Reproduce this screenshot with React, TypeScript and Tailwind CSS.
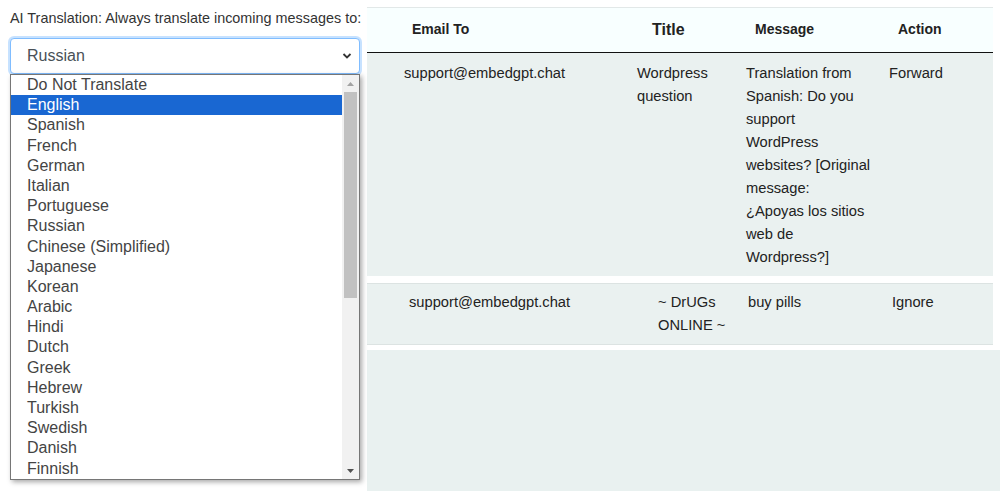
import React from 'react';

const LANGUAGES = [
  'Do Not Translate',
  'English',
  'Spanish',
  'French',
  'German',
  'Italian',
  'Portuguese',
  'Russian',
  'Chinese (Simplified)',
  'Japanese',
  'Korean',
  'Arabic',
  'Hindi',
  'Dutch',
  'Greek',
  'Hebrew',
  'Turkish',
  'Swedish',
  'Danish',
  'Finnish',
];

const LanguagePicker: React.FC = () => (
  <div className="relative w-[367px] shrink-0 pl-[10px] pt-[9px]">
    <div className="text-[14.4px] leading-[18px] text-[#333]">
      AI Translation: Always translate incoming messages to:
    </div>

    {/* Focused select */}
    <div className="mt-[11px] flex h-[36px] w-[350px] items-center rounded-[4px] border border-[#80bdff] bg-white pl-[16px] pr-[7px] text-[16px] text-[#495057] shadow-[0_0_0_2px_rgba(0,123,255,0.22)]">
      <span className="flex-1">Russian</span>
      <svg className="h-[8px] w-[10px]" viewBox="0 0 10 8" fill="none">
        <path d="M1.5 2l3.5 3.5L8.5 2" stroke="#333" strokeWidth={1.8} />
      </svg>
    </div>

    {/* Open option list */}
    <div className="absolute left-[10px] top-[74px] z-10 flex h-[406px] w-[350px] border border-[#767676] bg-white shadow-[2px_2px_5px_rgba(0,0,0,0.35)]">
      <ul className="flex-1">
        {LANGUAGES.map((lang) => (
          <li
            key={lang}
            className={`h-[20.2px] pl-[16px] text-[16px] leading-[20px] ${
              lang === 'English' ? 'bg-[#1967d2] text-white' : 'text-[#444]'
            }`}
          >
            {lang}
          </li>
        ))}
      </ul>
      <div className="flex w-[17px] flex-col bg-[#f1f1f1]">
        <div className="flex h-[17px] items-center justify-center">
          <svg className="h-[4px] w-[7px]" viewBox="0 0 7 4">
            <path d="M0 4L3.5 0L7 4z" fill="#a3a3a3" />
          </svg>
        </div>
        <div className="mx-[2px] h-[206px] bg-[#c1c1c1]" />
        <div className="flex-1" />
        <div className="flex h-[17px] items-center justify-center">
          <svg className="h-[4px] w-[7px]" viewBox="0 0 7 4">
            <path d="M0 0L7 0L3.5 4z" fill="#505050" />
          </svg>
        </div>
      </div>
    </div>
  </div>
);

const MessageTable: React.FC = () => (
  <div className="flex flex-1 flex-col pt-[7px] text-[14.7px] leading-[23px] text-[#222]">
    {/* Header */}
    <div className="mr-[7px] flex h-[46px] items-center border-t border-b border-t-[#e2e8e8] border-b-[#111] bg-[#f8ffff] pb-[2px] text-[14px] font-bold">
      <div className="w-[285px] pl-[45px]">Email To</div>
      <div className="w-[103px] text-[16px]">Title</div>
      <div className="w-[143px]">Message</div>
      <div>Action</div>
    </div>

    {/* Row 1 */}
    <div className="mr-[7px] flex bg-[#eaf1f0] pb-[7px] pt-[9px]">
      <div className="w-[270px] pl-[37px]">support@embedgpt.chat</div>
      <div className="w-[109px] pr-[10px]">Wordpress question</div>
      <div className="w-[143px] pr-[18px]">
        Translation from Spanish: Do you support WordPress websites? [Original message: ¿Apoyas los sitios web de Wordpress?]
      </div>
      <div>Forward</div>
    </div>

    {/* Row 2 */}
    <div className="mr-[7px] mt-[7px] flex border-t border-b border-[#dce3e2] bg-[#eaf1f0] pb-[7px] pt-[7px]">
      <div className="w-[291px] pl-[42px]">support@embedgpt.chat</div>
      <div className="w-[90px] pr-[8px]">~ DrUGs ONLINE ~</div>
      <div className="w-[144px]">buy pills</div>
      <div>Ignore</div>
    </div>

    <div className="mt-[5px] flex-1 bg-[#e9f1f0]" />
  </div>
);

export default function App() {
  return (
    <div className="flex h-[491px] w-[1000px] overflow-hidden bg-white font-['Liberation_Sans',Arial,sans-serif]">
      <LanguagePicker />
      <MessageTable />
    </div>
  );
}
